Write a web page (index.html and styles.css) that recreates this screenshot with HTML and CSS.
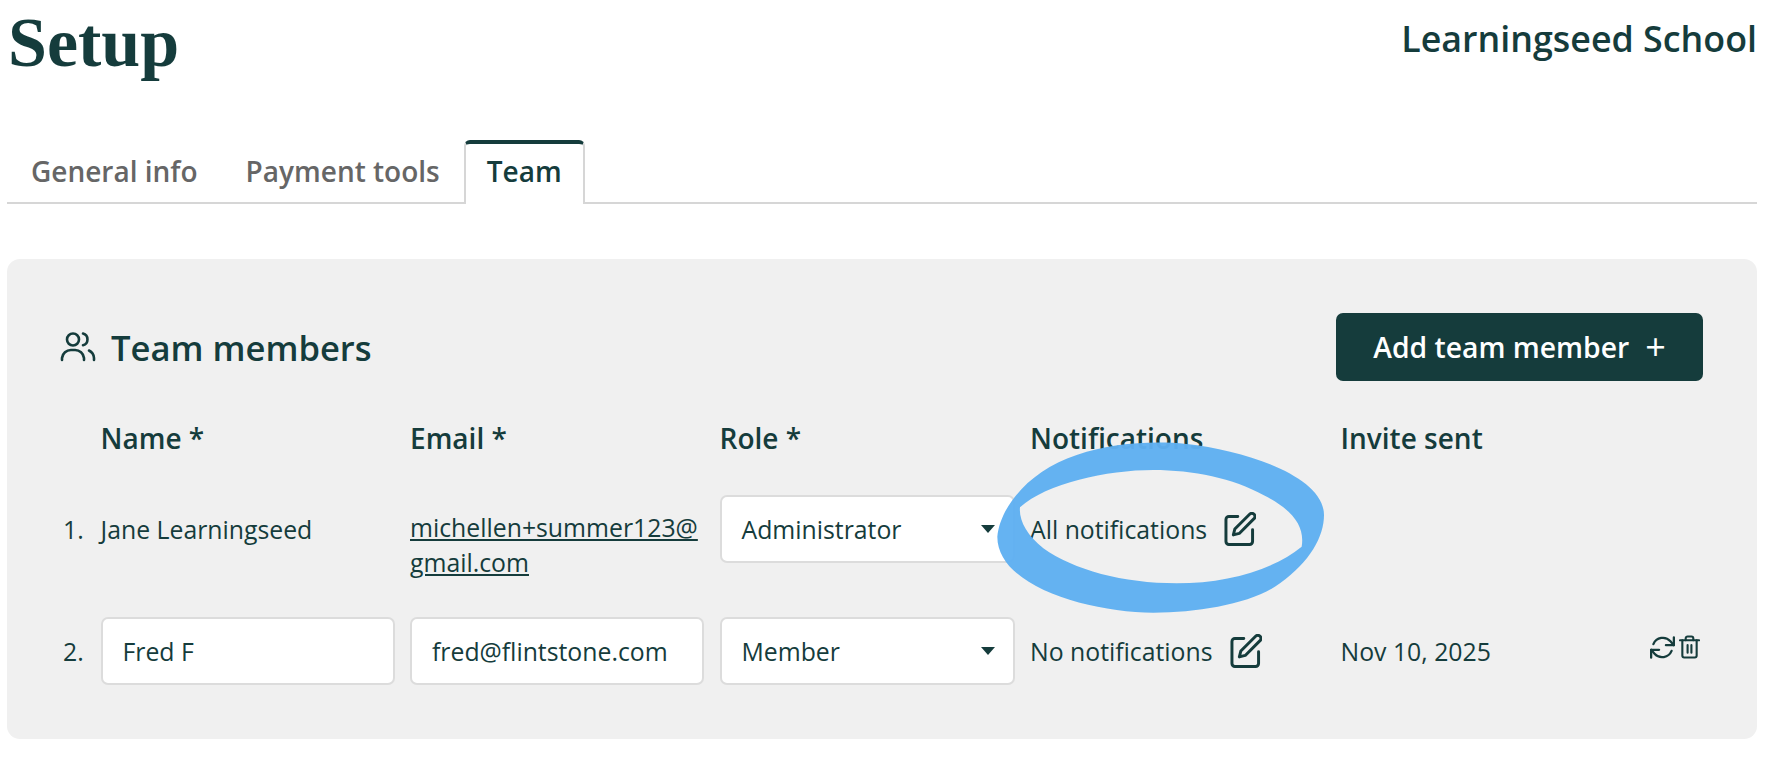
FILE: index.html
```html
<!DOCTYPE html>
<html lang="en">
<head>
<meta charset="utf-8">
<title>Setup</title>
<link rel="stylesheet" href="styles.css">
</head>
<body>
<div class="page">
  <header class="top">
    <h1 class="title">Setup</h1>
    <div class="school">Learningseed School</div>
  </header>
  <nav class="tabs">
    <a class="tab">General info</a>
    <a class="tab">Payment tools</a>
    <a class="tab tab-active">Team</a>
  </nav>
  <section class="card">
    <div class="card-head">
      <h2 class="card-title">
        <svg class="icon-users" viewBox="0 0 36 32" fill="none" stroke="currentColor" stroke-width="2.6" stroke-linecap="round" stroke-linejoin="round"><circle cx="13" cy="8.500" r="6"/><path d="M2 29v-2a9 9 0 0 1 9-8h4a9 9 0 0 1 9 8v2"/><path d="M23 2.600a6 6 0 0 1 0 11.600"/><path d="M29 19.500a9 9 0 0 1 5 7.500v2"/></svg>
        Team members
      </h2>
      <button class="btn-add">Add team member<span class="plus">+</span></button>
    </div>
    <div class="grid">
      <div class="th"></div>
      <div class="th">Name *</div>
      <div class="th">Email *</div>
      <div class="th">Role *</div>
      <div class="th">Notifications</div>
      <div class="th">Invite sent</div>
      <div class="th"></div>

      <div class="cell num">1.</div>
      <div class="cell">Jane Learningseed</div>
      <div class="cell cell-email"><a class="email">michellen+summer123@gmail.com</a></div>
      <div class="field select">Administrator<span class="caret"></span></div>
      <div class="cell notif">All notifications
        <svg class="icon-edit" viewBox="2 1 21 23" fill="none" stroke="currentColor" stroke-width="2" stroke-linecap="round" stroke-linejoin="round"><path d="M11 4H5a2 2 0 0 0-2 2v15a2 2 0 0 0 2 2h14a2 2 0 0 0 2-2v-8"/><path d="M19 2.500a2.100 2.100 0 0 1 3 3L12 15.500l-4 1 1-4z"/></svg>
      </div>
      <div class="cell"></div>
      <div class="cell"></div>

      <div class="cell num">2.</div>
      <div class="field">Fred F</div>
      <div class="field">fred@flintstone.com</div>
      <div class="field select">Member<span class="caret"></span></div>
      <div class="cell notif">No notifications
        <svg class="icon-edit" viewBox="2 1 21 23" fill="none" stroke="currentColor" stroke-width="2" stroke-linecap="round" stroke-linejoin="round"><path d="M11 4H5a2 2 0 0 0-2 2v15a2 2 0 0 0 2 2h14a2 2 0 0 0 2-2v-8"/><path d="M19 2.500a2.100 2.100 0 0 1 3 3L12 15.500l-4 1 1-4z"/></svg>
      </div>
      <div class="cell">Nov 10, 2025</div>
      <div class="cell actions">
        <svg class="icon-refresh" viewBox="2 1 22 22" fill="none" stroke="currentColor" stroke-width="2" stroke-linecap="round" stroke-linejoin="round"><path d="M23 3v7h-7"/><path d="M3 21v-7h7"/><path d="M5 9a9 9 0 0 1 15-2.500l3 3.500"/><path d="M21 15a9 9 0 0 1-15 2.500l-3-3.500"/></svg>
        <svg class="icon-trash" viewBox="0 0 22 24" fill="none" stroke="currentColor" stroke-width="2.200" stroke-linecap="round" stroke-linejoin="round"><path d="M1 5h20"/><path d="M7 5V3a2 2 0 0 1 2-2h4a2 2 0 0 1 2 2v2"/><path d="M3.500 5v16a2 2 0 0 0 2 2h11a2 2 0 0 0 2-2V5"/><path d="M9 10v8"/><path d="M13 10v8"/></svg>
      </div>
    </div>
  </section>
  <svg class="scribble" viewBox="0 0 1140 600" aria-hidden="true">
    <path fill-rule="evenodd" d="M52 350C60 260 150 150 290 105C400 68 520 62 620 72C800 92 1032 170 1032 285C1032 350 990 425 900 490C820 550 660 578 520 578C330 578 52 500 52 350ZM120 262C116 300 140 345 190 385C280 450 430 490 590 490C740 490 880 450 965 380C975 320 940 270 850 225C760 175 640 150 520 150C380 150 200 190 120 262Z"/>
  </svg>
</div>
</body>
</html>
```
FILE: styles.css
```css
* { box-sizing: border-box; }
html, body { margin: 0; padding: 0; background: #fff; }
body {
  font-family: "Open Sans", "Liberation Sans", sans-serif;
  color: #153c3c;
  width: 1780px;
  height: 766px;
  overflow: hidden;
}
.page {
  position: relative;
  padding: 0 23px 0 7px;
  height: 766px;
}
.top {
  display: flex;
  justify-content: space-between;
  align-items: flex-start;
  height: 140px;
}
.title {
  margin: 6px 0 0 1px;
  font-family: "Liberation Serif", serif;
  font-weight: 700;
  font-size: 70px;
  line-height: 74px;
}
.school {
  margin-top: 15px;
  font-size: 35.800px;
  line-height: 46px;
  font-weight: 600;
}
.tabs {
  display: flex;
  align-items: stretch;
  height: 64px;
  border-bottom: 2px solid #d6d6d6;
}
.tab {
  display: flex;
  align-items: center;
  padding: 0 24px;
  font-size: 28px;
  font-weight: 600;
  color: #666;
}
.tab-active {
  color: #153c3c;
  height: 64px;
  background: #fff;
  padding: 0 21px 6px;
  border: 2px solid #d6d6d6;
  border-top: 4px solid #153c3c;
  border-bottom: none;
  border-radius: 6px 6px 0 0;
}
.card {
  margin-top: 55px;
  height: 480px;
  background: #f0f0f0;
  border-radius: 13px;
  padding: 54px 54px 0 53px;
}
.card-head {
  display: flex;
  justify-content: space-between;
  align-items: center;
  height: 68px;
}
.card-title {
  display: flex;
  align-items: center;
  gap: 15px;
  margin: 0;
  font-size: 34.600px;
  font-weight: 600;
}
.icon-users { width: 36px; height: 32px; }
.btn-add {
  display: flex;
  align-items: center;
  justify-content: center;
  gap: 16px;
  width: 367px;
  height: 68px;
  border: none;
  border-radius: 7px;
  background: #153c3c;
  color: #fff;
  font-family: inherit;
  font-size: 28.300px;
  font-weight: 600;
}
.plus { font-weight: 400; font-size: 36px; line-height: 1; }
.grid {
  display: grid;
  grid-template-columns: 25px 294px 294px 295px 295px 295px 51px;
  column-gap: 15.500px;
  grid-template-rows: 114px 122px 68px;
}
.th {
  padding-top: 39px;
  font-size: 28px;
  line-height: 36px;
  font-weight: 600;
}
.cell {
  display: flex;
  align-items: center;
  height: 67px;
  font-size: 24.800px;
}
.num { padding-left: 3px; }
.cell-email { display: block; height: auto; padding-top: 15px; line-height: 35px; }
.email { text-decoration: underline; word-break: break-all; display: block; width: 293px; }
.field {
  display: flex;
  align-items: center;
  justify-content: space-between;
  height: 68px;
  padding: 0 20px;
  background: #fff;
  border: 2px solid #dcdcdc;
  border-radius: 7px;
  font-size: 24.800px;
}
.select { padding-right: 18px; }
.caret {
  width: 0;
  height: 0;
  border-left: 7px solid transparent;
  border-right: 7px solid transparent;
  border-top: 8px solid #153c3c;
}
.notif { gap: 17px; }
.icon-edit { width: 32px; height: 34px; flex: none; }
.actions { gap: 4px; align-items: flex-start; padding-top: 18px; margin-left: -1px; }
.icon-refresh { width: 25px; height: 25px; }
.icon-trash { width: 21px; height: 24px; }
.scribble {
  position: absolute;
  left: 980px;
  top: 420px;
  width: 380px;
  height: 200px;
  fill: #5fb0f2;
  opacity: 0.96;
  pointer-events: none;
}
```
